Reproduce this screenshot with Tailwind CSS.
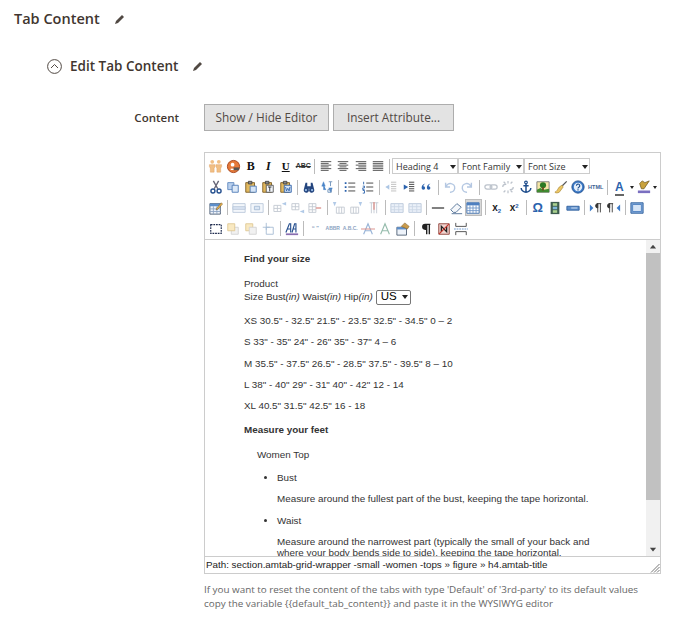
<!DOCTYPE html>
<html lang="en">
<head>
  <meta charset="UTF-8" />
  <title>Tab Content</title>
  <script src="https://cdn.jsdelivr.net/npm/@tailwindcss/browser@4"></script>
</head>
<body class="bg-white font-['Open_Sans',sans-serif] text-[#41362f] overflow-hidden">
  <svg class="hidden">
    <symbol id="align-l" viewBox="0 0 16 16"><path d="M2 3h12M2 5h9M2 7h12M2 9h9M2 11h12M2 13h9" stroke="#444" fill="none"/></symbol>
    <symbol id="align-c" viewBox="0 0 16 16"><path d="M2 3h12M4 5h8M2 7h12M4 9h8M2 11h12M4 13h8" stroke="#444" fill="none"/></symbol>
    <symbol id="align-r" viewBox="0 0 16 16"><path d="M2 3h12M5 5h9M2 7h12M5 9h9M2 11h12M5 13h9" stroke="#444" fill="none"/></symbol>
    <symbol id="align-j" viewBox="0 0 16 16"><path d="M2 3h12M2 5h12M2 7h12M2 9h12M2 11h12M2 13h12" stroke="#444" fill="none"/></symbol>
    <symbol id="cut" viewBox="0 0 16 16"><path d="M5 1l5 9M11 1l-5 9" stroke="#667" stroke-width="1.6" fill="none"/><circle cx="4.5" cy="12.5" r="2.3" fill="none" stroke="#25508f" stroke-width="1.6"/><circle cx="11.5" cy="12.5" r="2.3" fill="none" stroke="#25508f" stroke-width="1.6"/></symbol>
    <symbol id="copy" viewBox="0 0 16 16"><path d="M2 3h7v8H2z" fill="#b9d0ee" stroke="#5d86bd"/><path d="M7 6h7v8H7z" fill="#dce9f8" stroke="#4b78b5"/></symbol>
    <symbol id="paste" viewBox="0 0 16 16"><path d="M2 3h10v11H2z" fill="#e2b95f" stroke="#7a5a22"/><path d="M5 1.500h4v3H5z" fill="#888" stroke="#444"/><path d="M7 7h7v7H7z" fill="#d5e4f6" stroke="#4b78b5"/></symbol>
    <symbol id="paste-t" viewBox="0 0 16 16"><path d="M2 3h10v11H2z" fill="#e2b95f" stroke="#7a5a22"/><path d="M5 1.500h4v3H5z" fill="#888" stroke="#444"/><path d="M6 6h8v8H6z" fill="#f3f6fb" stroke="#555"/><path d="M8 8h4M10 8v5" stroke="#222" fill="none"/></symbol>
    <symbol id="paste-w" viewBox="0 0 16 16"><path d="M2 3h10v11H2z" fill="#e2b95f" stroke="#7a5a22"/><path d="M5 1.500h4v3H5z" fill="#888" stroke="#444"/><path d="M6 6h8v8H6z" fill="#d5e4f6" stroke="#2b5fa8"/><path d="M7.500 8l1 4.500 1.500-3 1.500 3 1-4.500" stroke="#2b5fa8" fill="none"/></symbol>
    <symbol id="find" viewBox="0 0 16 16"><path d="M4 3h2v4h4V3h2l2 8a3 3 0 1 1-5.500-1H7.500A3 3 0 1 1 2 11z" fill="#25467f"/><circle cx="4.500" cy="11.500" r="1.300" fill="#9cc0ea"/><circle cx="11.500" cy="11.500" r="1.300" fill="#9cc0ea"/></symbol>
    <symbol id="replace" viewBox="0 0 16 16"><path d="M4 2L2 7h4zM4 5v6h3M12 14l2-5h-4z" fill="#4b86c9" stroke="#4b86c9" stroke-width=".5"/><path d="M10 2h4M12 2v5M9 11h4v3H9z" stroke="#6b8fb8" fill="none"/></symbol>
    <symbol id="ul" viewBox="0 0 16 16"><path d="M6 3.500h8M6 8h8M6 12.500h8" stroke="#333" fill="none"/><path d="M2 2.500h2v2H2zM2 7h2v2H2zM2 11.500h2v2H2z" fill="#2a62ad"/></symbol>
    <symbol id="ol" viewBox="0 0 16 16"><path d="M6 3.500h8M6 8h8M6 12.500h8" stroke="#333" fill="none"/><path d="M3 2v3M2 7h2v2H2v2h2M2 12h2v3H2" stroke="#2a62ad" fill="none"/></symbol>
    <symbol id="outdent" viewBox="0 0 16 16"><path d="M8 2.500h6M8 5h6M8 7.500h6M8 10h6M8 12.500h6" stroke="#777" fill="none"/><path d="M2 8l4-3v6z" fill="#5d8fcb"/><path d="M6 8H2" stroke="#5d8fcb"/></symbol>
    <symbol id="indent" viewBox="0 0 16 16"><path d="M8 2.500h6M8 5h6M8 7.500h6M8 10h6M8 12.500h6" stroke="#333" fill="none"/><path d="M7 8L2 5v6z" fill="#2a62ad"/></symbol>
    <symbol id="quote" viewBox="0 0 16 16"><path d="M7 4C4 5 3 7 3 9a2 2 0 1 0 2-2c0-1 1-2 2-3zM13 4c-3 1-4 3-4 5a2 2 0 1 0 2-2c0-1 1-2 2-3z" fill="#2a62ad"/></symbol>
    <symbol id="undo" viewBox="0 0 16 16"><path d="M3 3v5h5M3.500 8A5 5 0 1 1 8 14" stroke="#2a62ad" stroke-width="1.600" fill="none"/></symbol>
    <symbol id="redo" viewBox="0 0 16 16"><path d="M13 3v5H8M12.500 8A5 5 0 1 0 8 14" stroke="#2a62ad" stroke-width="1.600" fill="none"/></symbol>
    <symbol id="link" viewBox="0 0 16 16"><rect x="1" y="5.500" width="8" height="5" rx="2.500" fill="none" stroke="#5a6a80" stroke-width="1.400"/><rect x="7" y="5.500" width="8" height="5" rx="2.500" fill="none" stroke="#5a6a80" stroke-width="1.400"/></symbol>
    <symbol id="unlink" viewBox="0 0 16 16"><path d="M2 8a3 3 0 0 1 3-3h1M14 8a3 3 0 0 1-3 3h-1M8 1v3M8 12v3M3 2l2 2M13 14l-2-2M13 2l-2 2M3 14l2-2" fill="none" stroke="#5a6a80" stroke-width="1.400"/></symbol>
    <symbol id="anchor" viewBox="0 0 16 16"><circle cx="8" cy="2.800" r="1.500" fill="none" stroke="#1e4d8c" stroke-width="1.300"/><path d="M8 4v10M5 6.500h6M2.500 9c0 3 3 5 5.500 5s5.500-2 5.500-5" stroke="#1e4d8c" stroke-width="1.700" fill="none"/></symbol>
    <symbol id="image" viewBox="0 0 16 16"><path d="M1 2h14v12H1z" fill="#f5e6a8" stroke="#777"/><path d="M1 11l4-2 4 2 6-1v4H1z" fill="#3f8a30"/><circle cx="8" cy="6" r="3.500" fill="#2b7a24"/><path d="M7 8h2v4H7z" fill="#6b4a1e"/></symbol>
    <symbol id="clean" viewBox="0 0 16 16"><path d="M9 6l5-5 1 1-5 5z" fill="#555"/><path d="M9 6l1.500 2L6 14c-2 1-4 1-5 0 2-1 3-3 3-3l2-3z" fill="#ecc664" stroke="#a3802b" stroke-width=".7"/></symbol>
    <symbol id="help" viewBox="0 0 16 16"><circle cx="8" cy="8" r="7" fill="#3b79c7" stroke="#1e4d8c"/><circle cx="8" cy="8" r="4.800" fill="#e4effb"/><path d="M6.200 6.500a1.900 1.900 0 1 1 2.800 1.700c-.7.400-1 .8-1 1.500" stroke="#1e4d8c" stroke-width="1.300" fill="none"/><path d="M7.300 10.500h1.400v1.400H7.300z" fill="#1e4d8c"/></symbol>
    <symbol id="tbl-edit" viewBox="0 0 16 16"><path d="M1 3h12v12H1z" fill="#eef3fa" stroke="#4a5a70"/><path d="M1 3h12v3H1z" fill="#5d8fcb"/><path d="M5 6v9M9 6v9M1 9h12M1 12h12" stroke="#8da4c2" fill="none"/><path d="M9 8l5-6 1.500 1.500-5.500 6-2 .5z" fill="#e8b04a" stroke="#7a5a22" stroke-width=".6"/></symbol>
    <symbol id="tbl-row" viewBox="0 0 16 16"><path d="M1 3h14v10H1z" fill="#eef3fa" stroke="#8da4c2"/><path d="M1 6.500h14v3H1z" fill="#c3d6ee" stroke="#8da4c2"/></symbol>
    <symbol id="tbl-cell" viewBox="0 0 16 16"><path d="M1 3h14v10H1z" fill="#eef3fa" stroke="#8da4c2"/><path d="M5 6h6v4H5z" fill="#c3d6ee" stroke="#6b8fb8"/></symbol>
    <symbol id="row-a" viewBox="0 0 16 16"><path d="M1 5h8M1 8.500h8M1 12h8M1 5v7M5 5v7M9 5v7" stroke="#9aa5b3" fill="none"/><path d="M10 3l5-2v4z" fill="#7da6d8"/></symbol>
    <symbol id="row-b" viewBox="0 0 16 16"><path d="M1 3h8M1 6.500h8M1 10h8M1 3v7M5 3v7M9 3v7" stroke="#9aa5b3" fill="none"/><path d="M10 12l5-2v4z" fill="#7da6d8"/></symbol>
    <symbol id="row-c" viewBox="0 0 16 16"><path d="M1 3h8M1 6.500h8M1 10h8M1 13h8M1 3v10M5 3v10M9 3v10" stroke="#9aa5b3" fill="none"/><path d="M9 8h6" stroke="#c8534a" stroke-width="1.600"/></symbol>
    <symbol id="col-a" viewBox="0 0 16 16"><path d="M5 7h9v7H5zM8 7v7M11 7v7" stroke="#9aa5b3" fill="none"/><path d="M1 1h4l-2 5z" fill="#7da6d8"/></symbol>
    <symbol id="col-b" viewBox="0 0 16 16"><path d="M2 7h9v7H2zM5 7v7M8 7v7" stroke="#9aa5b3" fill="none"/><path d="M11 1h4l-2 5z" fill="#7da6d8"/></symbol>
    <symbol id="col-c" viewBox="0 0 16 16"><path d="M3 2l10 0M5 2v12M8 2v12M11 2v12" stroke="#9aa5b3" fill="none"/><path d="M8 1v9" stroke="#c8534a" stroke-width="1.600"/></symbol>
    <symbol id="tbl-split" viewBox="0 0 16 16"><path d="M1 3h14v10H1z" fill="#dfe9f6" stroke="#8da4c2"/><path d="M5 3v10M10 3v10M1 6.500h14M1 10h14" stroke="#a9bcd5" fill="none"/></symbol>
    <symbol id="hr" viewBox="0 0 16 16"><path d="M1 8h14" stroke="#222" stroke-width="1.300"/></symbol>
    <symbol id="eraser" viewBox="0 0 16 16"><path d="M2 10l7-7 5 4-6 6H5z" fill="#f4f7fb" stroke="#4a6a90"/><path d="M3 14.500h12" stroke="#4a6a90"/></symbol>
    <symbol id="tbl" viewBox="0 0 16 16"><path d="M1 2h14v12H1z" fill="#fff" stroke="#3f6fae"/><path d="M1 2h14v3H1z" fill="#4f80c0"/><path d="M4.500 5v9M8 5v9M11.500 5v9M1 8h14M1 11h14" stroke="#6f96c8" fill="none"/></symbol>
    <symbol id="film" viewBox="0 0 16 16"><path d="M3 1h10v14H3z" fill="#3d5c4f"/><path d="M5.500 2.500h5v3h-5z" fill="#a9d18e"/><path d="M5.500 6.500h5v3h-5z" fill="#7db7d8"/><path d="M5.500 10.500h5v3h-5z" fill="#a9d18e"/></symbol>
    <symbol id="nbsp" viewBox="0 0 16 16"><path d="M1 6h14v4.500H1z" fill="#5d8fcb" stroke="#2f5f9c"/><path d="M6 8h7" stroke="#dfe9f6"/></symbol>
    <symbol id="ltr" viewBox="0 0 16 16"><path d="M1 4l4 4-4 4z" fill="#3b79c7"/><path d="M9 3h5M10 3a2.500 2.500 0 0 0 0 5zM10 3v10M13 3v10" stroke="#333" fill="#333"/></symbol>
    <symbol id="rtl" viewBox="0 0 16 16"><path d="M15 4l-4 4 4 4z" fill="#3b79c7"/><path d="M2 3h5M3 3a2.500 2.500 0 0 0 0 5zM3 3v10M6 3v10" stroke="#333" fill="#333"/></symbol>
    <symbol id="full" viewBox="0 0 16 16"><path d="M1 2h14v12H1z" fill="#7da6d8" stroke="#2f5f9c"/><path d="M3 4h10v8H3z" fill="#d5e4f6" stroke="#4f80c0"/></symbol>
    <symbol id="layer" viewBox="0 0 16 16"><path d="M2 3h12v10H2z" fill="none" stroke="#1d2a4d" stroke-width="1.300" stroke-dasharray="2 1"/></symbol>
    <symbol id="fwd" viewBox="0 0 16 16"><path d="M6 6h8v8H6z" fill="#e9e9e9" stroke="#b5b5b5"/><path d="M2 2h8v8H2z" fill="#f6dc9a" stroke="#c9a24a"/></symbol>
    <symbol id="back" viewBox="0 0 16 16"><path d="M2 2h8v8H2z" fill="#f6dc9a" stroke="#c9a24a"/><path d="M6 6h8v8H6z" fill="#e9e9e9" stroke="#b5b5b5"/></symbol>
    <symbol id="abs" viewBox="0 0 16 16"><path d="M6 6h8v8H6z" fill="none" stroke="#6b8fb8"/><path d="M6 1v8M2 6h8" stroke="#6b8fb8"/></symbol>
    <symbol id="attrs" viewBox="0 0 16 16"><path d="M1 6h11v9H1z" fill="#eef3fa" stroke="#4a5a70"/><path d="M1 6h11v2.500H1z" fill="#5d8fcb"/><path d="M6 5l4-4 5 4-2 3z" fill="#c99b4c" stroke="#7a5a22" stroke-width=".6"/></symbol>
    <symbol id="para" viewBox="0 0 16 16"><path d="M13 2H7a3 3 0 0 0 0 7h1v5h1.600V3.500H11V14h1.600V3.500H13z" fill="#222"/></symbol>
    <symbol id="nobr" viewBox="0 0 16 16"><path d="M2 2h12v12H2z" fill="#f0d4cf" stroke="#8c3a33"/><path d="M5 11V5l6 6V5" stroke="#222" stroke-width="1.500" fill="none"/><path d="M2.500 13.500l11-11" stroke="#c8342a" stroke-width="1.300"/></symbol>
    <symbol id="pagebr" viewBox="0 0 16 16"><path d="M2 1v4h12V1M2 15v-4h12v4" fill="none" stroke="#444"/><path d="M0 8h16" stroke="#5d8fcb" stroke-dasharray="2 1"/></symbol>
    <symbol id="style" viewBox="0 0 16 16"><path d="M1 12L5 2h1.500v10M2.500 8h4M8 12l3-10h1.500v10M9 8h3.500" stroke="#27508f" stroke-width="1.300" fill="none"/><path d="M1 13h14v2H1z" fill="#8a6fb0"/></symbol>
    <symbol id="del-a" viewBox="0 0 16 16"><path d="M3 14L8 2l5 12M5 10h6" stroke="#6f96c8" stroke-width="1.300" fill="none"/><path d="M0 8h16" stroke="#c8534a"/></symbol>
    <symbol id="ins-a" viewBox="0 0 16 16"><path d="M3 14L8 2l5 12M5 10h6" stroke="#6aa08a" stroke-width="1.300" fill="none"/></symbol>
    <symbol id="arrow-up" viewBox="0 0 8 8"><path d="M4 2.500l2.500 3h-5z" fill="#444"/></symbol>
  </svg>

  <main class="pl-[14px] pt-[10px]">
    <div class="flex items-center h-[18px]">
      <h2 class="text-[14.500px] font-semibold leading-[18px]">Tab Content</h2>
      <svg class="w-[12px] h-[12px] ml-[14px]" viewBox="0 0 12 12"><path d="M1 11l1-3 6-6 2 2-6 6z" fill="#514943"/></svg>
    </div>

    <div class="flex items-center h-[18px] mt-[29px] ml-[33px]">
      <svg class="w-[15px] h-[15px]" viewBox="0 0 15 15"><circle cx="7.500" cy="7.500" r="6.900" fill="none" stroke="#514943"/><path d="M4 9l3.500-3.500L11 9" fill="none" stroke="#514943"/></svg>
      <h3 class="text-[13.500px] font-semibold leading-[18px] ml-[8px]">Edit Tab Content</h3>
      <svg class="w-[12px] h-[12px] ml-[14px]" viewBox="0 0 12 12"><path d="M1 11l1-3 6-6 2 2-6 6z" fill="#514943"/></svg>
    </div>

    <div class="flex mt-[29px]">
      <label class="w-[165px] text-right text-[11.500px] font-semibold leading-[27px] text-[#41362f]">Content</label>
      <div class="ml-[25px] w-[457px]">
        <div class="flex gap-[4px]">
          <button class="h-[27px] w-[125px] bg-[#e3e3e3] border border-[#adadad] text-[11.800px] font-medium text-[#514943]">Show / Hide Editor</button>
          <button class="h-[27px] w-[121px] bg-[#e3e3e3] border border-[#adadad] text-[11.800px] font-medium text-[#514943]">Insert Attribute...</button>
        </div>

        <div class="mt-[21px] border border-[#ccc] w-[457px] font-['Liberation_Sans',sans-serif]">
          <!-- toolbar -->
          <div class="h-[87px] pl-[2px] pt-[3px] border-b border-[#ccc] flex flex-col">
            <div class="flex items-center h-[21px]">
              <span class="w-[17.500px] h-[17px] flex items-center justify-center"><svg class="w-[15px] h-[15px]" viewBox="0 0 16 16"><circle cx="4.500" cy="3" r="2" fill="#f1bf85"/><circle cx="11.500" cy="3" r="2" fill="#f1bf85"/><path d="M1.500 6h6v2l-1 2v4h-4v-4l-1-2zM8.500 6h6v2l-1 2v4h-4v-4l-1-2z" fill="#f1bf85" stroke="#e0a060" stroke-width=".5"/></svg></span>
              <span class="w-[17.500px] h-[17px] flex items-center justify-center"><svg class="w-[15px] h-[15px]" viewBox="0 0 16 16"><circle cx="8" cy="8" r="6.500" fill="#e67a3a" stroke="#a8431a"/><circle cx="7" cy="6" r="2" fill="#fff"/><path d="M8 9h6v3H8z" fill="#555"/><path d="M5 11h3" stroke="#fff" stroke-width="1.500"/></svg></span>
              <span class="w-[17.500px] text-center font-['Liberation_Serif',serif] font-bold text-[12px] text-[#111]">B</span>
              <span class="w-[17.500px] text-center font-['Liberation_Serif',serif] font-bold italic text-[12px] text-[#111]">I</span>
              <span class="w-[17.500px] text-center font-['Liberation_Serif',serif] font-bold underline text-[11px] text-[#111]">U</span>
              <span class="w-[17.500px] text-center font-bold text-[7px] text-[#333] line-through">ABC</span>
              <span class="w-[5px] flex justify-center"><i class="w-px h-[15px] bg-[#bbb]"></i></span>
              <span class="w-[17.500px] flex justify-center"><svg class="w-[14px] h-[14px]"><use href="#align-l"/></svg></span>
              <span class="w-[17.500px] flex justify-center"><svg class="w-[14px] h-[14px]"><use href="#align-c"/></svg></span>
              <span class="w-[17.500px] flex justify-center"><svg class="w-[14px] h-[14px]"><use href="#align-r"/></svg></span>
              <span class="w-[17.500px] flex justify-center"><svg class="w-[14px] h-[14px]"><use href="#align-j"/></svg></span>
              <span class="w-[5px] flex justify-center"><i class="w-px h-[15px] bg-[#bbb]"></i></span>
              <span class="w-[66px] h-[16px] border border-[#ccc] flex items-center pl-[3px] text-[9px] font-['Open_Sans',sans-serif] text-[#333] relative">Heading 4<i class="absolute right-[1px] top-[6px] border-x-[3px] border-t-[4px] border-x-transparent border-t-[#222]"></i></span>
              <span class="w-[66px] h-[16px] border border-[#ccc] flex items-center pl-[3px] text-[9px] font-['Open_Sans',sans-serif] text-[#333] relative">Font Family<i class="absolute right-[1px] top-[6px] border-x-[3px] border-t-[4px] border-x-transparent border-t-[#222]"></i></span>
              <span class="w-[66px] h-[16px] border border-[#ccc] flex items-center pl-[3px] text-[9px] font-['Open_Sans',sans-serif] text-[#333] relative">Font Size<i class="absolute right-[1px] top-[6px] border-x-[3px] border-t-[4px] border-x-transparent border-t-[#222]"></i></span>
            </div>

            <div class="flex items-center h-[21px]">
              <span class="w-[17.500px] flex justify-center"><svg class="w-[14px] h-[14px]"><use href="#cut"/></svg></span>
              <span class="w-[17.500px] flex justify-center"><svg class="w-[14px] h-[14px]"><use href="#copy"/></svg></span>
              <span class="w-[17.500px] flex justify-center"><svg class="w-[14px] h-[14px]"><use href="#paste"/></svg></span>
              <span class="w-[17.500px] flex justify-center"><svg class="w-[14px] h-[14px]"><use href="#paste-t"/></svg></span>
              <span class="w-[17.500px] flex justify-center"><svg class="w-[14px] h-[14px]"><use href="#paste-w"/></svg></span>
              <span class="w-[6px] flex justify-center"><i class="w-px h-[15px] bg-[#bbb]"></i></span>
              <span class="w-[17.500px] flex justify-center"><svg class="w-[14px] h-[14px]"><use href="#find"/></svg></span>
              <span class="w-[17.500px] flex justify-center"><svg class="w-[14px] h-[14px]"><use href="#replace"/></svg></span>
              <span class="w-[6px] flex justify-center"><i class="w-px h-[15px] bg-[#bbb]"></i></span>
              <span class="w-[17.500px] flex justify-center"><svg class="w-[14px] h-[14px]"><use href="#ul"/></svg></span>
              <span class="w-[17.500px] flex justify-center"><svg class="w-[14px] h-[14px]"><use href="#ol"/></svg></span>
              <span class="w-[6px] flex justify-center"><i class="w-px h-[15px] bg-[#bbb]"></i></span>
              <span class="w-[17.500px] flex justify-center opacity-50"><svg class="w-[14px] h-[14px]"><use href="#outdent"/></svg></span>
              <span class="w-[17.500px] flex justify-center"><svg class="w-[14px] h-[14px]"><use href="#indent"/></svg></span>
              <span class="w-[17.500px] flex justify-center"><svg class="w-[14px] h-[14px]"><use href="#quote"/></svg></span>
              <span class="w-[6px] flex justify-center"><i class="w-px h-[15px] bg-[#bbb]"></i></span>
              <span class="w-[17.500px] flex justify-center opacity-35"><svg class="w-[14px] h-[14px]"><use href="#undo"/></svg></span>
              <span class="w-[17.500px] flex justify-center opacity-35"><svg class="w-[14px] h-[14px]"><use href="#redo"/></svg></span>
              <span class="w-[6px] flex justify-center"><i class="w-px h-[15px] bg-[#bbb]"></i></span>
              <span class="w-[17.500px] flex justify-center opacity-40"><svg class="w-[14px] h-[14px]"><use href="#link"/></svg></span>
              <span class="w-[17.500px] flex justify-center opacity-40"><svg class="w-[14px] h-[14px]"><use href="#unlink"/></svg></span>
              <span class="w-[17.500px] flex justify-center"><svg class="w-[14px] h-[14px]"><use href="#anchor"/></svg></span>
              <span class="w-[17.500px] flex justify-center"><svg class="w-[14px] h-[14px]"><use href="#image"/></svg></span>
              <span class="w-[17.500px] flex justify-center"><svg class="w-[14px] h-[14px]"><use href="#clean"/></svg></span>
              <span class="w-[17.500px] flex justify-center"><svg class="w-[14px] h-[14px]"><use href="#help"/></svg></span>
              <span class="w-[17.500px] text-center font-bold text-[5.500px] text-[#3a5f94]">HTML</span>
              <span class="w-[6px] flex justify-center"><i class="w-px h-[15px] bg-[#bbb]"></i></span>
              <span class="w-[17.500px] text-center leading-[12px] font-bold text-[12px] text-[#2a62ad]"><span class="border-b-[2px] border-[#666]">A</span></span>
              <span class="w-[8px] flex justify-center"><i class="border-x-[2.500px] border-t-[3px] border-x-transparent border-t-[#222]"></i></span>
              <span class="w-[15px] flex justify-center"><svg class="w-[14px] h-[14px]" viewBox="0 0 16 16"><path d="M3 4l3-3 3 2 5-2-6 9H5z" fill="#c9a23c" stroke="#6b5518" stroke-width=".8"/><path d="M1 12h14v3H1z" fill="#7a6fc0"/></svg></span>
              <span class="w-[8px] flex justify-center"><i class="border-x-[2.500px] border-t-[3px] border-x-transparent border-t-[#222]"></i></span>
            </div>

            <div class="flex items-center h-[21px]">
              <span class="w-[17.500px] flex justify-center"><svg class="w-[14px] h-[14px]"><use href="#tbl-edit"/></svg></span>
              <span class="w-[6px] flex justify-center"><i class="w-px h-[15px] bg-[#bbb]"></i></span>
              <span class="w-[17.500px] flex justify-center opacity-60"><svg class="w-[14px] h-[14px]"><use href="#tbl-row"/></svg></span>
              <span class="w-[17.500px] flex justify-center opacity-60"><svg class="w-[14px] h-[14px]"><use href="#tbl-cell"/></svg></span>
              <span class="w-[6px] flex justify-center"><i class="w-px h-[15px] bg-[#bbb]"></i></span>
              <span class="w-[17.500px] flex justify-center opacity-60"><svg class="w-[14px] h-[14px]"><use href="#row-a"/></svg></span>
              <span class="w-[17.500px] flex justify-center opacity-60"><svg class="w-[14px] h-[14px]"><use href="#row-b"/></svg></span>
              <span class="w-[17.500px] flex justify-center opacity-60"><svg class="w-[14px] h-[14px]"><use href="#row-c"/></svg></span>
              <span class="w-[6px] flex justify-center"><i class="w-px h-[15px] bg-[#bbb]"></i></span>
              <span class="w-[17.500px] flex justify-center opacity-60"><svg class="w-[14px] h-[14px]"><use href="#col-a"/></svg></span>
              <span class="w-[17.500px] flex justify-center opacity-60"><svg class="w-[14px] h-[14px]"><use href="#col-b"/></svg></span>
              <span class="w-[17.500px] flex justify-center opacity-60"><svg class="w-[14px] h-[14px]"><use href="#col-c"/></svg></span>
              <span class="w-[6px] flex justify-center"><i class="w-px h-[15px] bg-[#bbb]"></i></span>
              <span class="w-[17.500px] flex justify-center opacity-60"><svg class="w-[14px] h-[14px]"><use href="#tbl-split"/></svg></span>
              <span class="w-[17.500px] flex justify-center opacity-60"><svg class="w-[14px] h-[14px]"><use href="#tbl-split"/></svg></span>
              <span class="w-[6px] flex justify-center"><i class="w-px h-[15px] bg-[#bbb]"></i></span>
              <span class="w-[17.500px] flex justify-center"><svg class="w-[14px] h-[14px]"><use href="#hr"/></svg></span>
              <span class="w-[17.500px] flex justify-center"><svg class="w-[14px] h-[14px]"><use href="#eraser"/></svg></span>
              <span class="w-[17.500px] h-[17px] flex items-center justify-center bg-[#d9d9d9] border border-[#bdbdbd]"><svg class="w-[14px] h-[14px]"><use href="#tbl"/></svg></span>
              <span class="w-[6px] flex justify-center"><i class="w-px h-[15px] bg-[#bbb]"></i></span>
              <span class="w-[17.500px] text-center font-bold text-[10px] text-[#222]">x<sub class="text-[6px] text-[#2a62ad]">2</sub></span>
              <span class="w-[17.500px] text-center font-bold text-[10px] text-[#222]">x<sup class="text-[6px] text-[#2a62ad]">2</sup></span>
              <span class="w-[6px] flex justify-center"><i class="w-px h-[15px] bg-[#bbb]"></i></span>
              <span class="w-[17.500px] text-center font-bold text-[13px] text-[#2a62ad]">Ω</span>
              <span class="w-[17.500px] flex justify-center"><svg class="w-[14px] h-[14px]"><use href="#film"/></svg></span>
              <span class="w-[17.500px] flex justify-center"><svg class="w-[14px] h-[14px]"><use href="#nbsp"/></svg></span>
              <span class="w-[6px] flex justify-center"><i class="w-px h-[15px] bg-[#bbb]"></i></span>
              <span class="w-[17.500px] flex justify-center"><svg class="w-[14px] h-[14px]"><use href="#ltr"/></svg></span>
              <span class="w-[17.500px] flex justify-center"><svg class="w-[14px] h-[14px]"><use href="#rtl"/></svg></span>
              <span class="w-[6px] flex justify-center"><i class="w-px h-[15px] bg-[#bbb]"></i></span>
              <span class="w-[17.500px] flex justify-center"><svg class="w-[14px] h-[14px]"><use href="#full"/></svg></span>
            </div>

            <div class="flex items-center h-[21px]">
              <span class="w-[17.500px] flex justify-center"><svg class="w-[14px] h-[14px]"><use href="#layer"/></svg></span>
              <span class="w-[17.500px] flex justify-center opacity-60"><svg class="w-[14px] h-[14px]"><use href="#fwd"/></svg></span>
              <span class="w-[17.500px] flex justify-center opacity-60"><svg class="w-[14px] h-[14px]"><use href="#back"/></svg></span>
              <span class="w-[17.500px] flex justify-center opacity-60"><svg class="w-[14px] h-[14px]"><use href="#abs"/></svg></span>
              <span class="w-[6px] flex justify-center"><i class="w-px h-[15px] bg-[#bbb]"></i></span>
              <span class="w-[17.500px] flex justify-center"><svg class="w-[14px] h-[14px]"><use href="#style"/></svg></span>
              <span class="w-[6px] flex justify-center"><i class="w-px h-[15px] bg-[#bbb]"></i></span>
              <span class="w-[17.500px] text-center font-bold text-[6px] text-[#8da4c2] tracking-tighter">“ ”</span>
              <span class="w-[17.500px] text-center font-bold text-[5px] text-[#8da4c2]">ABBR</span>
              <span class="w-[17.500px] text-center font-bold text-[5px] text-[#8da4c2]">A.B.C.</span>
              <span class="w-[17.500px] flex justify-center opacity-70"><svg class="w-[14px] h-[14px]"><use href="#del-a"/></svg></span>
              <span class="w-[17.500px] flex justify-center opacity-70"><svg class="w-[14px] h-[14px]"><use href="#ins-a"/></svg></span>
              <span class="w-[17.500px] flex justify-center"><svg class="w-[14px] h-[14px]"><use href="#attrs"/></svg></span>
              <span class="w-[6px] flex justify-center"><i class="w-px h-[15px] bg-[#bbb]"></i></span>
              <span class="w-[17.500px] flex justify-center"><svg class="w-[14px] h-[14px]"><use href="#para"/></svg></span>
              <span class="w-[17.500px] flex justify-center"><svg class="w-[14px] h-[14px]"><use href="#nobr"/></svg></span>
              <span class="w-[17.500px] flex justify-center"><svg class="w-[14px] h-[14px]"><use href="#pagebr"/></svg></span>
            </div>
          </div>

          <!-- editor body -->
          <div class="flex h-[317px] border-b border-[#ccc]">
            <div class="flex-1 overflow-hidden pl-[39px] pt-[13px] pr-[50px] text-[9.850px] leading-[11.500px] text-[#333]">
              <h4 class="font-bold mb-[13px]">Find your size</h4>
              <p>Product</p>
              <p class="mb-[10px] flex items-center h-[16px]">Size Bust<em>(in)</em>&nbsp;Waist<em>(in)</em>&nbsp;Hip<em>(in)</em>
                <span class="ml-[3px] w-[35px] h-[15px] border border-[#767676] rounded-[2px] text-[11.500px] text-black flex items-center pl-[4px]">US<i class="ml-[5px] border-x-[3px] border-t-[4px] border-x-transparent border-t-[#222]"></i></span>
              </p>
              <p class="mb-[9.750px]">XS 30.5" - 32.5" 21.5" - 23.5" 32.5" - 34.5" 0 – 2</p>
              <p class="mb-[9.750px]">S 33" - 35" 24" - 26" 35" - 37" 4 – 6</p>
              <p class="mb-[9.750px]">M 35.5" - 37.5" 26.5" - 28.5" 37.5" - 39.5" 8 – 10</p>
              <p class="mb-[9.750px]">L 38" - 40" 29" - 31" 40" - 42" 12 - 14</p>
              <p class="mb-[12px]">XL 40.5" 31.5" 42.5" 16 - 18</p>
              <h4 class="font-bold mb-[14px]">Measure your feet</h4>
              <p class="ml-[13px] mb-[11px]">Women Top</p>
              <ul class="list-disc ml-[33px]">
                <li class="mb-[10px]">Bust</li>
              </ul>
              <p class="ml-[33px] mb-[10px]">Measure around the fullest part of the bust, keeping the tape horizontal.</p>
              <ul class="list-disc ml-[33px]">
                <li class="mb-[10px]">Waist</li>
              </ul>
              <p class="ml-[33px] leading-[11px]">Measure around the narrowest part (typically the small of your back and where your body bends side to side), keeping the tape horizontal.</p>
            </div>
            <div class="w-[14px] bg-[#f1f1f1] flex flex-col items-center">
              <svg class="w-[10px] h-[13px] shrink-0" viewBox="0 0 8 10"><use href="#arrow-up"/></svg>
              <div class="w-full h-[247px] bg-[#c1c1c1] shrink-0"></div>
              <svg class="w-[10px] h-[13px] mt-auto rotate-180 shrink-0" viewBox="0 0 8 10"><use href="#arrow-up"/></svg>
            </div>
          </div>

          <!-- status bar -->
          <div class="relative h-[16px] pl-[1px] text-[9.800px] leading-[15px] text-[#222]">Path: section.amtab-grid-wrapper -small -women -tops » figure » h4.amtab-title
            <svg class="absolute right-0 bottom-0 w-[10px] h-[10px]" viewBox="0 0 10 10"><path d="M9.500 1L1 9.500M9.500 4L4 9.500M9.500 7L7 9.500" stroke="#777" fill="none"/></svg>
          </div>
        </div>

        <p class="mt-[8px] text-[9.850px] leading-[14px] text-[#666]">If you want to reset the content of the tabs with type 'Default' of '3rd-party' to its default values<br>copy the variable {{default_tab_content}} and paste it in the WYSIWYG editor</p>
      </div>
    </div>
  </main>
</body>
</html>
